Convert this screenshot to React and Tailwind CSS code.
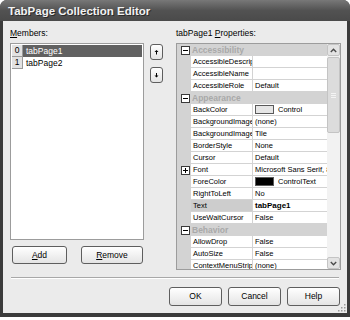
import React from "react";

const rows = [
  { cat: "Accessibility" },
  { l: "AccessibleDescription", v: "" },
  { l: "AccessibleName", v: "" },
  { l: "AccessibleRole", v: "Default" },
  { cat: "Appearance" },
  { l: "BackColor", v: "Control", sw: "light" },
  { l: "BackgroundImage", v: "(none)" },
  { l: "BackgroundImageLayout", v: "Tile" },
  { l: "BorderStyle", v: "None" },
  { l: "Cursor", v: "Default" },
  { l: "Font", v: "Microsoft Sans Serif, 8.25pt", plus: true },
  { l: "ForeColor", v: "ControlText", sw: "dark" },
  { l: "RightToLeft", v: "No" },
  { l: "Text", v: "tabPage1", bold: true, sel: true },
  { l: "UseWaitCursor", v: "False" },
  { cat: "Behavior" },
  { l: "AllowDrop", v: "False" },
  { l: "AutoSize", v: "False" },
  { l: "ContextMenuStrip", v: "(none)" },
];

function Box({ plus }) {
  return (
    <svg width="9" height="9" viewBox="0 0 9 9" className="block">
      <rect x="0.5" y="0.5" width="8" height="8" fill="#ffffff" stroke="#3a3a3a" />
      <line x1="2" y1="4.5" x2="7" y2="4.5" stroke="#000" />
      {plus && <line x1="4.5" y1="2" x2="4.5" y2="7" stroke="#000" />}
    </svg>
  );
}

function Btn({ children, className }) {
  return (
    <div
      className={
        "flex items-center justify-center rounded-[3px] border border-[#5e5e5e] bg-gradient-to-b from-[#ffffff] to-[#e4e4e4] text-[8.5px] leading-none text-black " +
        className
      }
    >
      {children}
    </div>
  );
}

function GridRow({ r }) {
  if (r.cat) {
    return (
      <div className="flex h-[12px] shrink-0 items-center bg-[#d3d3d3]">
        <div className="flex w-[14px] shrink-0 items-center justify-center pl-[2px]">
          <Box />
        </div>
        <span className="pl-[1px] text-[8.5px] font-bold leading-[12px] text-[#a9a9a9]">{r.cat}</span>
      </div>
    );
  }
  return (
    <div className="flex h-[12px] shrink-0">
      <div className="flex w-[14px] shrink-0 items-center justify-center bg-[#d3d3d3] pl-[2px]">
        {r.plus && <Box plus />}
      </div>
      <div
        className={
          "w-[62px] shrink-0 overflow-hidden whitespace-nowrap border-b border-r border-[#d3d3d3] pl-[2px] text-[7.5px] leading-[11px] text-black " +
          (r.sel ? "bg-[#cdcdcd]" : "bg-white")
        }
      >
        {r.l}
      </div>
      <div
        className={
          "flex min-w-0 flex-1 items-center overflow-hidden whitespace-nowrap border-b border-[#d3d3d3] bg-white pl-[2px] leading-[11px] text-black " +
          (r.bold ? "text-[8px] font-bold" : "text-[7.5px]")
        }
      >
        {r.sw === "light" && (
          <span className="mr-[4px] inline-block h-[9px] w-[19px] shrink-0 border border-[#5a5a5a] bg-[#e6e6e6]" />
        )}
        {r.sw === "dark" && (
          <span className="mr-[4px] inline-block h-[9px] w-[19px] shrink-0 border border-[#5a5a5a] bg-black" />
        )}
        {r.v}
      </div>
    </div>
  );
}

export default function App() {
  return (
    <div className="h-[320px] w-[350px] bg-white font-['Liberation_Sans',Arial,sans-serif]">
      <div className="flex h-[317px] w-[350px] flex-col rounded-t-[7px] bg-[#3b3b3b] px-[3px] pb-[4px]">
        {/* title bar */}
        <div className="-mx-[3px] flex h-[21px] shrink-0 items-center rounded-t-[7px] bg-gradient-to-b from-[#787878] via-[#525252] to-[#4a4a4a] pl-[8px] pt-[2px]">
          <span className="text-[11.5px] font-bold leading-none text-[#f2f2f2] [text-shadow:1px_1px_0_#2a2a2a]">
            TabPage Collection Editor
          </span>
        </div>
        {/* body */}
        <div className="relative flex flex-1 flex-col bg-[#ebebeb]">
          <div className="flex pl-[7px] pt-[7px]">
            {/* left column */}
            <div className="flex w-[134px] flex-col">
              <div className="h-[15px] text-[8.5px] leading-[10px] text-black">
                <span className="underline">M</span>embers:
              </div>
              <div className="h-[197px] border border-[#9c9c9c] bg-white p-[1px]">
                <div className="flex h-[12px]">
                  <div className="flex w-[11px] items-center justify-center border-b border-r border-[#9a9a9a] bg-[#e2e2e2] text-[8.5px] leading-none text-black">
                    0
                  </div>
                  <div className="flex flex-1 items-center bg-[#616161] pl-[3px] text-[8.5px] leading-none text-white">
                    tabPage1
                  </div>
                </div>
                <div className="flex h-[12px]">
                  <div className="flex w-[11px] items-center justify-center border-b border-r border-[#9a9a9a] bg-[#e2e2e2] text-[8.5px] leading-none text-black">
                    1
                  </div>
                  <div className="flex flex-1 items-center pl-[3px] text-[8.5px] leading-none text-black">
                    tabPage2
                  </div>
                </div>
              </div>
              <div className="mt-[6px] flex pl-[2px]">
                <Btn className="h-[18px] w-[55px]">
                  <span>
                    <span className="underline">A</span>dd
                  </span>
                </Btn>
                <Btn className="ml-[14px] h-[18px] w-[62px]">
                  <span>
                    <span className="underline">R</span>emove
                  </span>
                </Btn>
              </div>
            </div>
            {/* up/down */}
            <div className="ml-[6px] flex flex-col pt-[16px]">
              <Btn className="h-[16px] w-[13px]">
                <svg width="7" height="7" viewBox="0 0 7 7">
                  <path d="M1.5 3 L3.5 1 L5.5 3 Z" fill="#000" />
                  <line x1="3.5" y1="2.5" x2="3.5" y2="5.5" stroke="#000" />
                </svg>
              </Btn>
              <Btn className="mt-[7px] h-[16px] w-[13px]">
                <svg width="7" height="7" viewBox="0 0 7 7">
                  <line x1="3.5" y1="1" x2="3.5" y2="4" stroke="#000" />
                  <path d="M1.5 3.5 L3.5 5.5 L5.5 3.5 Z" fill="#000" />
                </svg>
              </Btn>
            </div>
            {/* right column */}
            <div className="ml-[13px] flex flex-col">
              <div className="h-[15px] text-[8.5px] leading-[10px] text-black">
                tabPage1 <span className="underline">P</span>roperties:
              </div>
              <div className="flex h-[227px] w-[165px] overflow-hidden border border-[#9c9c9c] bg-white">
                <div className="flex w-[150px] flex-col overflow-hidden">
                  {rows.map((r, i) => (
                    <GridRow key={i} r={r} />
                  ))}
                </div>
                <div className="flex w-[13px] flex-col bg-[#f2f2f2]">
                  <div className="flex h-[12px] items-center justify-center rounded-[2px] border border-[#c4c4c4] bg-[#e3e3e3]">
                    <svg width="7" height="5" viewBox="0 0 7 5">
                      <path d="M0.8 4 L3.5 1.3 L6.2 4" fill="none" stroke="#4a4a4a" strokeWidth="1.4" />
                    </svg>
                  </div>
                  <div className="mt-[1px] flex h-[76px] items-center justify-center rounded-[2px] border border-[#c4c4c4] bg-[#dcdcdc]">
                    <div className="flex flex-col gap-[1px]">
                      <div className="h-[1px] w-[5px] bg-[#f4f4f4]" />
                      <div className="h-[1px] w-[5px] bg-[#f4f4f4]" />
                      <div className="h-[1px] w-[5px] bg-[#f4f4f4]" />
                    </div>
                  </div>
                  <div className="flex-1" />
                  <div className="flex h-[12px] items-center justify-center rounded-[2px] border border-[#c4c4c4] bg-[#e3e3e3]">
                    <svg width="7" height="5" viewBox="0 0 7 5">
                      <path d="M0.8 1 L3.5 3.7 L6.2 1" fill="none" stroke="#4a4a4a" strokeWidth="1.4" />
                    </svg>
                  </div>
                </div>
              </div>
            </div>
          </div>
          {/* separator */}
          <div className="ml-[8px] mt-[7px] w-[328px]">
            <div className="h-[1px] bg-[#a8a8a8]" />
            <div className="h-[1px] bg-white" />
          </div>
          {/* bottom buttons */}
          <div className="mt-[8px] flex justify-end gap-[6px] pr-[7px]">
            <Btn className="h-[19px] w-[53px]">OK</Btn>
            <Btn className="h-[19px] w-[53px]">Cancel</Btn>
            <Btn className="h-[19px] w-[53px]">Help</Btn>
          </div>
          {/* size grip */}
          <svg className="absolute bottom-[1px] right-[1px]" width="9" height="9" viewBox="0 0 9 9">
            {[
              [7, 1],
              [7, 4],
              [4, 4],
              [7, 7],
              [4, 7],
              [1, 7],
            ].map(([x, y], i) => (
              <rect key={i} x={x} y={y} width="1.5" height="1.5" fill="#9a9a9a" />
            ))}
          </svg>
        </div>
      </div>
    </div>
  );
}
